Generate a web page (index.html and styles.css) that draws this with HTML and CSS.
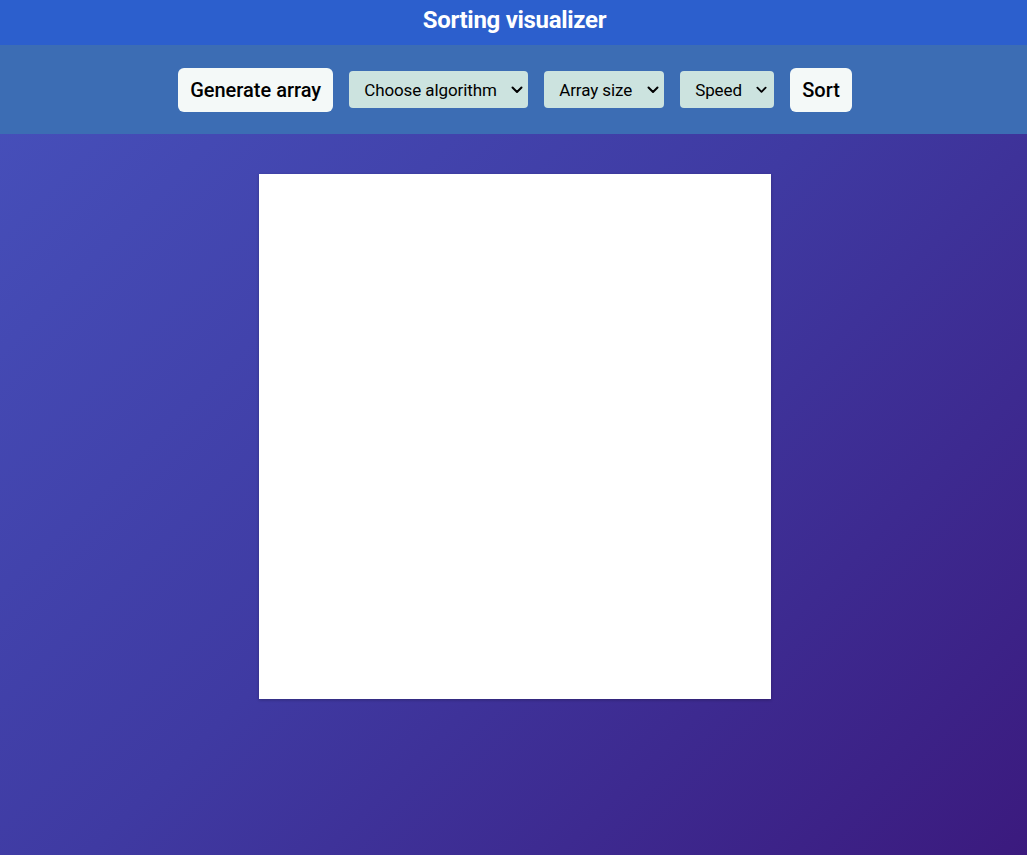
FILE: index.html
```html
<!DOCTYPE html>
<html>
<head>
<meta charset="utf-8">
<title>Sorting visualizer</title>
<link rel="stylesheet" href="styles.css">
</head>
<body>
<header class="title-bar"><h1 class="title">Sorting visualizer</h1></header>
<nav class="toolbar">
  <button class="btn">Generate array</button>
  <span class="select-wrap">
    <select class="sel sel-algo"><option>Choose algorithm</option></select>
    <svg class="chev" viewBox="0 0 12 8" width="12" height="8"><path d="M1.5 1.5 L6 6 L10.5 1.5" fill="none" stroke="#000" stroke-width="2" stroke-linecap="round" stroke-linejoin="round"/></svg>
  </span>
  <span class="select-wrap">
    <select class="sel sel-size"><option>Array size</option></select>
    <svg class="chev" viewBox="0 0 12 8" width="12" height="8"><path d="M1.5 1.5 L6 6 L10.5 1.5" fill="none" stroke="#000" stroke-width="2" stroke-linecap="round" stroke-linejoin="round"/></svg>
  </span>
  <span class="select-wrap">
    <select class="sel sel-speed"><option>Speed</option></select>
    <svg class="chev" viewBox="0 0 12 8" width="12" height="8"><path d="M1.5 1.5 L6 6 L10.5 1.5" fill="none" stroke="#000" stroke-width="2" stroke-linecap="round" stroke-linejoin="round"/></svg>
  </span>
  <button class="btn">Sort</button>
</nav>
<main class="stage">
  <div class="canvas"></div>
</main>
</body>
</html>
```

FILE: styles.css
```css
html, body {
  margin: 0;
  padding: 0;
}
body {
  min-height: 855px;
  font-family: Roboto, "Liberation Sans", sans-serif;
  background: linear-gradient(135deg, #4752bd 0%, #3f3aa2 50%, #3b1a7e 100%);
}
.title-bar {
  height: 45px;
  background: #2c5fcd;
  display: flex;
  align-items: center;
  justify-content: center;
}
.title {
  margin: 0;
  color: #fff;
  font-size: 24px;
  font-weight: 700;
  letter-spacing: -0.3px;
  position: relative;
  top: -3px;
  left: 1px;
}
.toolbar {
  height: 89px;
  background: #3c6db4;
  display: flex;
  align-items: center;
  justify-content: center;
  gap: 16px;
  padding-left: 3px;
  box-sizing: border-box;
}
.btn {
  height: 44px;
  padding: 0 12px;
  border: none;
  border-radius: 6px;
  background: #f4f9f8;
  font-family: Roboto, "Liberation Sans", sans-serif;
  font-size: 20px;
  font-weight: 500;
  color: #000;
}
.select-wrap {
  position: relative;
  display: flex;
}
.sel {
  -webkit-appearance: none;
  appearance: none;
  height: 37px;
  border: none;
  border-radius: 4px;
  background-color: #cce3df;
  font-family: Roboto, "Liberation Sans", sans-serif;
  font-size: 17px;
  letter-spacing: -0.1px;
  color: #000;
  padding: 0 20px 0 15px;
  margin: 0;
}
.chev {
  position: absolute;
  right: 5px;
  top: 15px;
  pointer-events: none;
}
.sel-algo { width: 179px; }
.sel-size { width: 120px; }
.sel-speed { width: 94px; }
.sel-speed + .chev { width: 11px; right: 7px; }
.stage {
  display: flex;
  justify-content: center;
  padding-top: 40px;
  padding-left: 2px;
}
.canvas {
  width: 512px;
  height: 525px;
  background: #fff;
  box-shadow: 0 1px 3px rgba(0,0,0,0.25);
}
```
